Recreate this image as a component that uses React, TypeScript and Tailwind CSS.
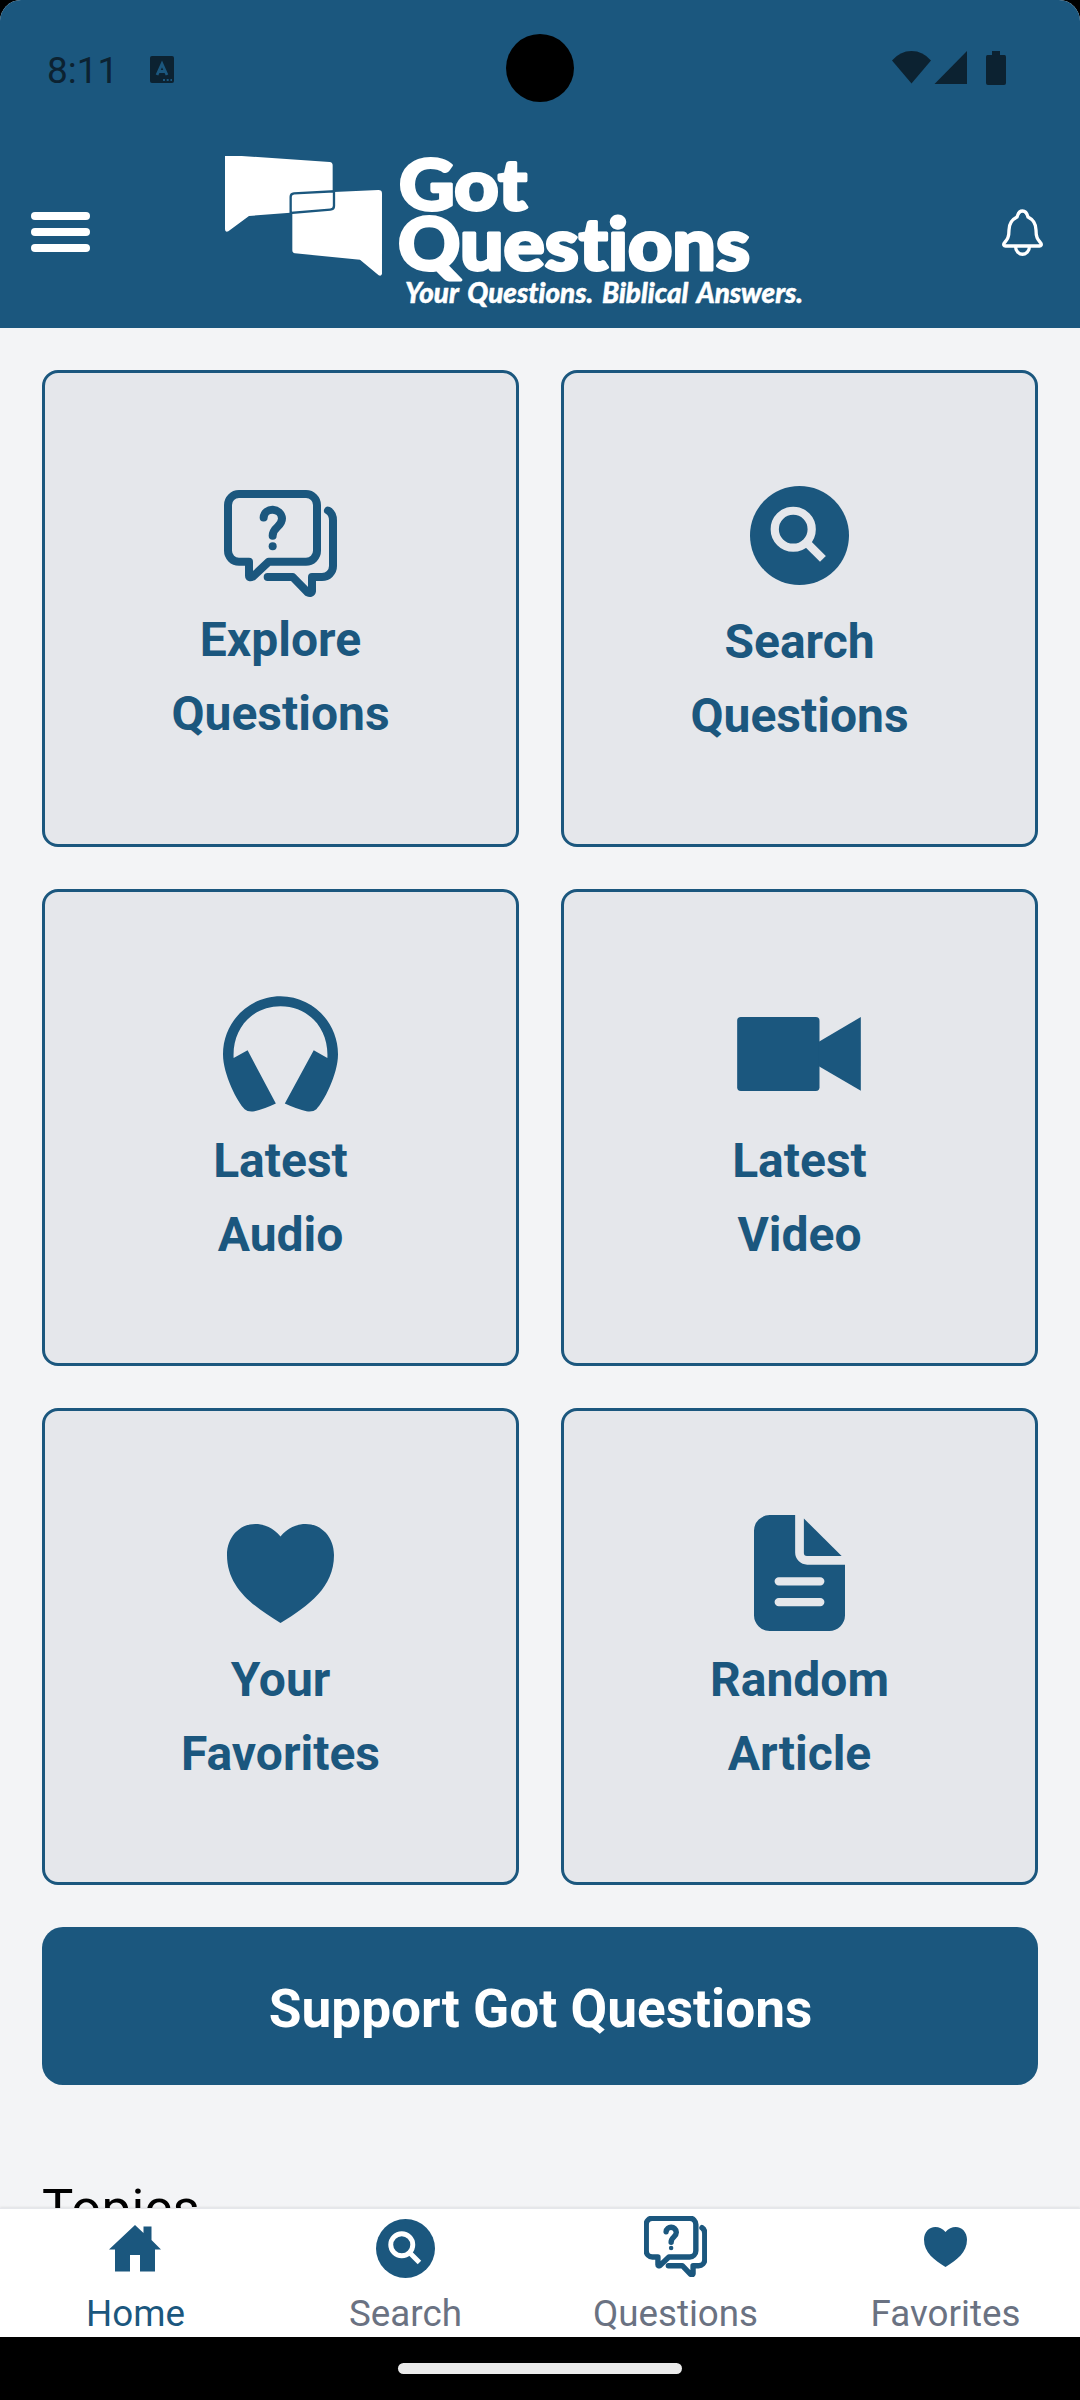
import type { ReactNode } from 'react';

interface IconProps {
  className?: string;
  stroke?: number;
}

function QuestionsIcon({ className, stroke = 24 }: IconProps) {
  return (
    <svg
      viewBox="0 0 339 322"
      className={className}
      preserveAspectRatio="none"
      fill="none"
      stroke="currentColor"
      strokeWidth={stroke}
      strokeLinecap="round"
      strokeLinejoin="round"
    >
      <path d="M45 12H246A33 33 0 0 1 279 45V183A33 33 0 0 1 246 216H134L86 261Q75 266 75 257V216H45A33 33 0 0 1 12 183V45A33 33 0 0 1 45 12Z" />
      <path d="M312 62Q327 70 327 92V229A33 33 0 0 1 294 262H264V304Q262 313 251 308L206 262H131" />
      <path d="M119 83C121 51 172 52 174 86C174 112 146 110 146 138" />
      <circle cx="146" cy="169" r="12" fill="currentColor" stroke="none" />
    </svg>
  );
}

// the glass takes the colour of whatever the disc lies on
function SearchIcon({ className, cutout }: IconProps & { cutout: string }) {
  return (
    <svg viewBox="0 0 300 300" className={className}>
      <circle cx="150" cy="150" r="150" fill="currentColor" />
      <g className={cutout} fill="none" strokeWidth="25">
        <circle cx="131" cy="131" r="56" />
        <path d="M170 170L221 221" />
      </g>
    </svg>
  );
}

function HeadphonesIcon({ className }: IconProps) {
  return (
    <svg viewBox="0 0 346 348" className={className} fill="currentColor">
      <path d="M173 0C268 0 346 78 346 175C346 236 302 320 281 340Q271 349 251 346Q225 341 186 323L273 163L314 186C319 95 255 30 173 30C91 30 27 95 32 186L74 163L159 323Q121 341 95 346Q75 349 65 340C44 320 0 236 0 175C0 78 78 0 173 0Z" />
    </svg>
  );
}

function VideoIcon({ className }: IconProps) {
  return (
    <svg viewBox="0 0 371 222" className={className} fill="currentColor">
      <rect width="247" height="222" rx="11" />
      <path d="M245 74L371 0V221L245 148Z" />
    </svg>
  );
}

function HeartIcon({ className }: IconProps) {
  return (
    <svg viewBox="0 0 322 298" className={className} preserveAspectRatio="none" fill="currentColor">
      <path d="M161 38C140 12 112 0 85 0C37 0 0 40 0 93C0 190 75 245 161 298C247 245 322 190 322 93C322 40 285 0 237 0C210 0 182 12 161 38Z" />
    </svg>
  );
}

function ArticleIcon({ className }: IconProps) {
  return (
    <svg viewBox="0 0 272 346" className={className} fill="currentColor">
      <path d="M47 0H123V112A36 36 0 0 0 159 148H272V300A47 47 0 0 1 225 346H47A47 47 0 0 1 0 300V46A47 47 0 0 1 47 0Z" />
      <path d="M149 10L262 122H158Q149 122 149 113Z" />
      <path className="stroke-gray-200" strokeWidth="25" strokeLinecap="round" d="M74 198H198M74 260H198" />
    </svg>
  );
}

function HomeIcon({ className }: IconProps) {
  return (
    <svg viewBox="0 0 52 47" className={className} fill="currentColor">
      <path d="M26 0L34.5 8V1.5H42.5V15L52 24.5H46V46.5H31V30H21V46.5H6V24.5H0Z" />
    </svg>
  );
}

function BellIcon({ className }: IconProps) {
  return (
    <svg
      viewBox="0 0 41 47"
      className={className}
      fill="none"
      stroke="currentColor"
      strokeWidth="3.3"
      strokeLinejoin="round"
    >
      <path d="M15 8C9 11 7 15 7 21C7 29 5 30.5 2.3 34C1 36 2 37 3.5 37H37.5C39 37 40 36 38.7 34C36 30.5 34 29 34 21C34 15 32 11 26 8C25 4 23.5 2 20.5 2C17.5 2 16 4 15 8Z" />
      <path d="M13.5 37C13.5 48 27.5 48 27.5 37" />
    </svg>
  );
}

function Logo() {
  return (
    <svg viewBox="225 156 580 155" className="h-[155px] w-[580px] overflow-visible" fill="#fff">
      <g transform="translate(225 156) scale(.3333)">
        <path d="M0 0H50L314 18Q323 19 323 28V152Q323 160 315 161L72 180L10 226Q0 230 0 220Z" />
        <path d="M202 122Q202 113 211 113L460 102Q471 102 471 112V354Q468 362 461 358L405 311L210 292Q202 291 202 283Z" />
        <path
          d="M197 171V122Q197 113 207 112L327 106V150Q327 160 316 161Z"
          fill="none"
          stroke="#1b577e"
          strokeWidth="7"
        />
      </g>
      <g className="font-['Lato'] font-black [font-variant-ligatures:none]" stroke="#fff" strokeLinejoin="round">
        <text x="399" y="209.5" textLength="128" lengthAdjust="spacingAndGlyphs" strokeWidth="3" className="text-[71px]">
          Got
        </text>
        <text x="398" y="270" textLength="352" lengthAdjust="spacingAndGlyphs" strokeWidth="3" className="text-[72px]">
          Questions
        </text>
        <text
          x="405"
          y="303"
          textLength="398"
          lengthAdjust="spacingAndGlyphs"
          strokeWidth=".5"
          className="text-[29px] italic [word-spacing:3px]"
        >
          Your Questions. Biblical Answers.
        </text>
      </g>
    </svg>
  );
}

function StatusBar() {
  return (
    <div className="relative flex h-[136px] items-start justify-between pl-[47px] pr-[74px] text-[#0c2231]">
      <div className="flex items-start gap-[35px] pt-[48px]">
        <span className="mt-[1px] w-[68px] text-[37px] leading-[44px]">8:11</span>
        <svg viewBox="0 0 24 27" className="mt-[8px] h-[27px] w-[24px]">
          <rect width="24" height="27" rx="2" fill="currentColor" />
          <path d="M7 19L12 8L17 19M8.5 15.5H15.5" fill="none" stroke="#1b577e" strokeWidth="2.8" />
          <path d="M13 24H22" stroke="#1b577e" strokeWidth="2" strokeDasharray="2 1.7" />
        </svg>
      </div>
      <div className="absolute left-[506px] top-[34px] size-[68px] rounded-full bg-black" />
      <svg viewBox="892 51 114 34" className="mt-[51px] h-[34px] w-[114px]" fill="currentColor">
        <path d="M892 60.5Q900 51 911.5 51T931 60.5L911.5 83.5Z" />
        <path d="M934.5 84L967 51V84Z" />
        <path d="M992 51H1000V55H1004.5Q1006 55 1006 57V83Q1006 85 1004 85H988Q986 85 986 83V57Q986 55 987.5 55H992Z" />
      </svg>
    </div>
  );
}

interface Tile {
  lines: [string, string];
  icon: ReactNode;
  iconBox?: string;
}

const tiles: Tile[] = [
  {
    lines: ['Explore', 'Questions'],
    icon: <QuestionsIcon className="h-[107px] w-[113px]" />,
    iconBox: 'h-[136px] pt-[17px]',
  },
  {
    lines: ['Search', 'Questions'],
    icon: <SearchIcon className="size-[99px]" cutout="stroke-gray-200" />,
  },
  { lines: ['Latest', 'Audio'], icon: <HeadphonesIcon className="h-[116px] w-[115px]" /> },
  { lines: ['Latest', 'Video'], icon: <VideoIcon className="h-[74px] w-[124px]" /> },
  { lines: ['Your', 'Favorites'], icon: <HeartIcon className="h-[99px] w-[107px]" /> },
  { lines: ['Random', 'Article'], icon: <ArticleIcon className="h-[116px] w-[91px]" /> },
];

const tabs = [
  { label: 'Home', icon: <HomeIcon className="h-[47px] w-[52px]" />, active: true },
  { label: 'Search', icon: <SearchIcon className="size-[59px]" cutout="stroke-white" /> },
  { label: 'Questions', icon: <QuestionsIcon className="-mt-[5px] h-[61px] w-[63px]" stroke={29} /> },
  { label: 'Favorites', icon: <HeartIcon className="-mt-[4px] h-[40px] w-[43px]" /> },
];

export default function App() {
  return (
    <div className="h-[2400px] w-[1080px] overflow-hidden bg-black font-['Roboto',sans-serif]">
      <div className="flex h-[2337px] flex-col overflow-hidden rounded-t-[21px] bg-gray-100">
        {/* Header */}
        <header className="h-[328px] shrink-0 bg-[#1b577e]">
          <StatusBar />
          <div className="flex pt-[20px] text-white">
            <button className="ml-[31px] mt-[56px] flex h-[40px] w-[59px] flex-col justify-between">
              <span className="h-[8px] w-full rounded-full bg-white" />
              <span className="h-[8px] w-full rounded-full bg-white" />
              <span className="h-[8px] w-full rounded-full bg-white" />
            </button>
            <div className="ml-[135px]">
              <Logo />
            </div>
            <button className="ml-[197px] mt-[53px] h-[47px] w-[41px]">
              <BellIcon className="h-[47px] w-[41px]" />
            </button>
          </div>
        </header>

        <main className="min-h-0 flex-1 overflow-hidden px-[42px] pt-[42px] text-[#1b577e]">
          <div className="grid grid-cols-2 gap-[42px]">
            {tiles.map((tile) => (
              <div
                key={tile.lines.join(' ')}
                className="flex h-[477px] flex-col items-center justify-center rounded-[16px] border-3 border-[#1b577e] bg-gray-200"
              >
                <div className={`flex items-center justify-center pr-[1px] ${tile.iconBox ?? 'h-[140px]'}`}>{tile.icon}</div>
                <p className="text-center text-[48px] font-bold leading-[73.5px]">
                  {tile.lines[0]}
                  <br />
                  {tile.lines[1]}
                </p>
              </div>
            ))}
          </div>

          <button className="mt-[42px] flex h-[158px] w-full items-center justify-center rounded-[21px] bg-[#1b577e] pl-[1px] pt-[7px] text-[53.2px] font-bold text-white">
            Support Got Questions
          </button>

          <h2 className="mt-[87px] text-[52.5px] leading-[73.5px] tracking-[0.4px] text-black">Topics</h2>
        </main>

        {/* Tab bar */}
        <nav className="relative grid h-[129px] shrink-0 grid-cols-4 border-t border-gray-200 bg-white shadow-[0_-1px_2px_rgba(0,0,0,0.08)]">
          {tabs.map((tab) => (
            <div key={tab.label} className="flex flex-col items-center">
              <div className="flex h-[79px] items-center justify-center text-[#1b577e]">{tab.icon}</div>
              <span
                className={`mt-[2px] pl-[1px] text-[36.75px] leading-[48px] ${tab.active ? 'text-[#1b577e]' : 'text-gray-500'}`}
              >
                {tab.label}
              </span>
            </div>
          ))}
        </nav>
      </div>
      <div className="flex h-[63px] items-center justify-center">
        <div className="h-[11px] w-[284px] rounded-full bg-[#ebebeb]" />
      </div>
    </div>
  );
}
